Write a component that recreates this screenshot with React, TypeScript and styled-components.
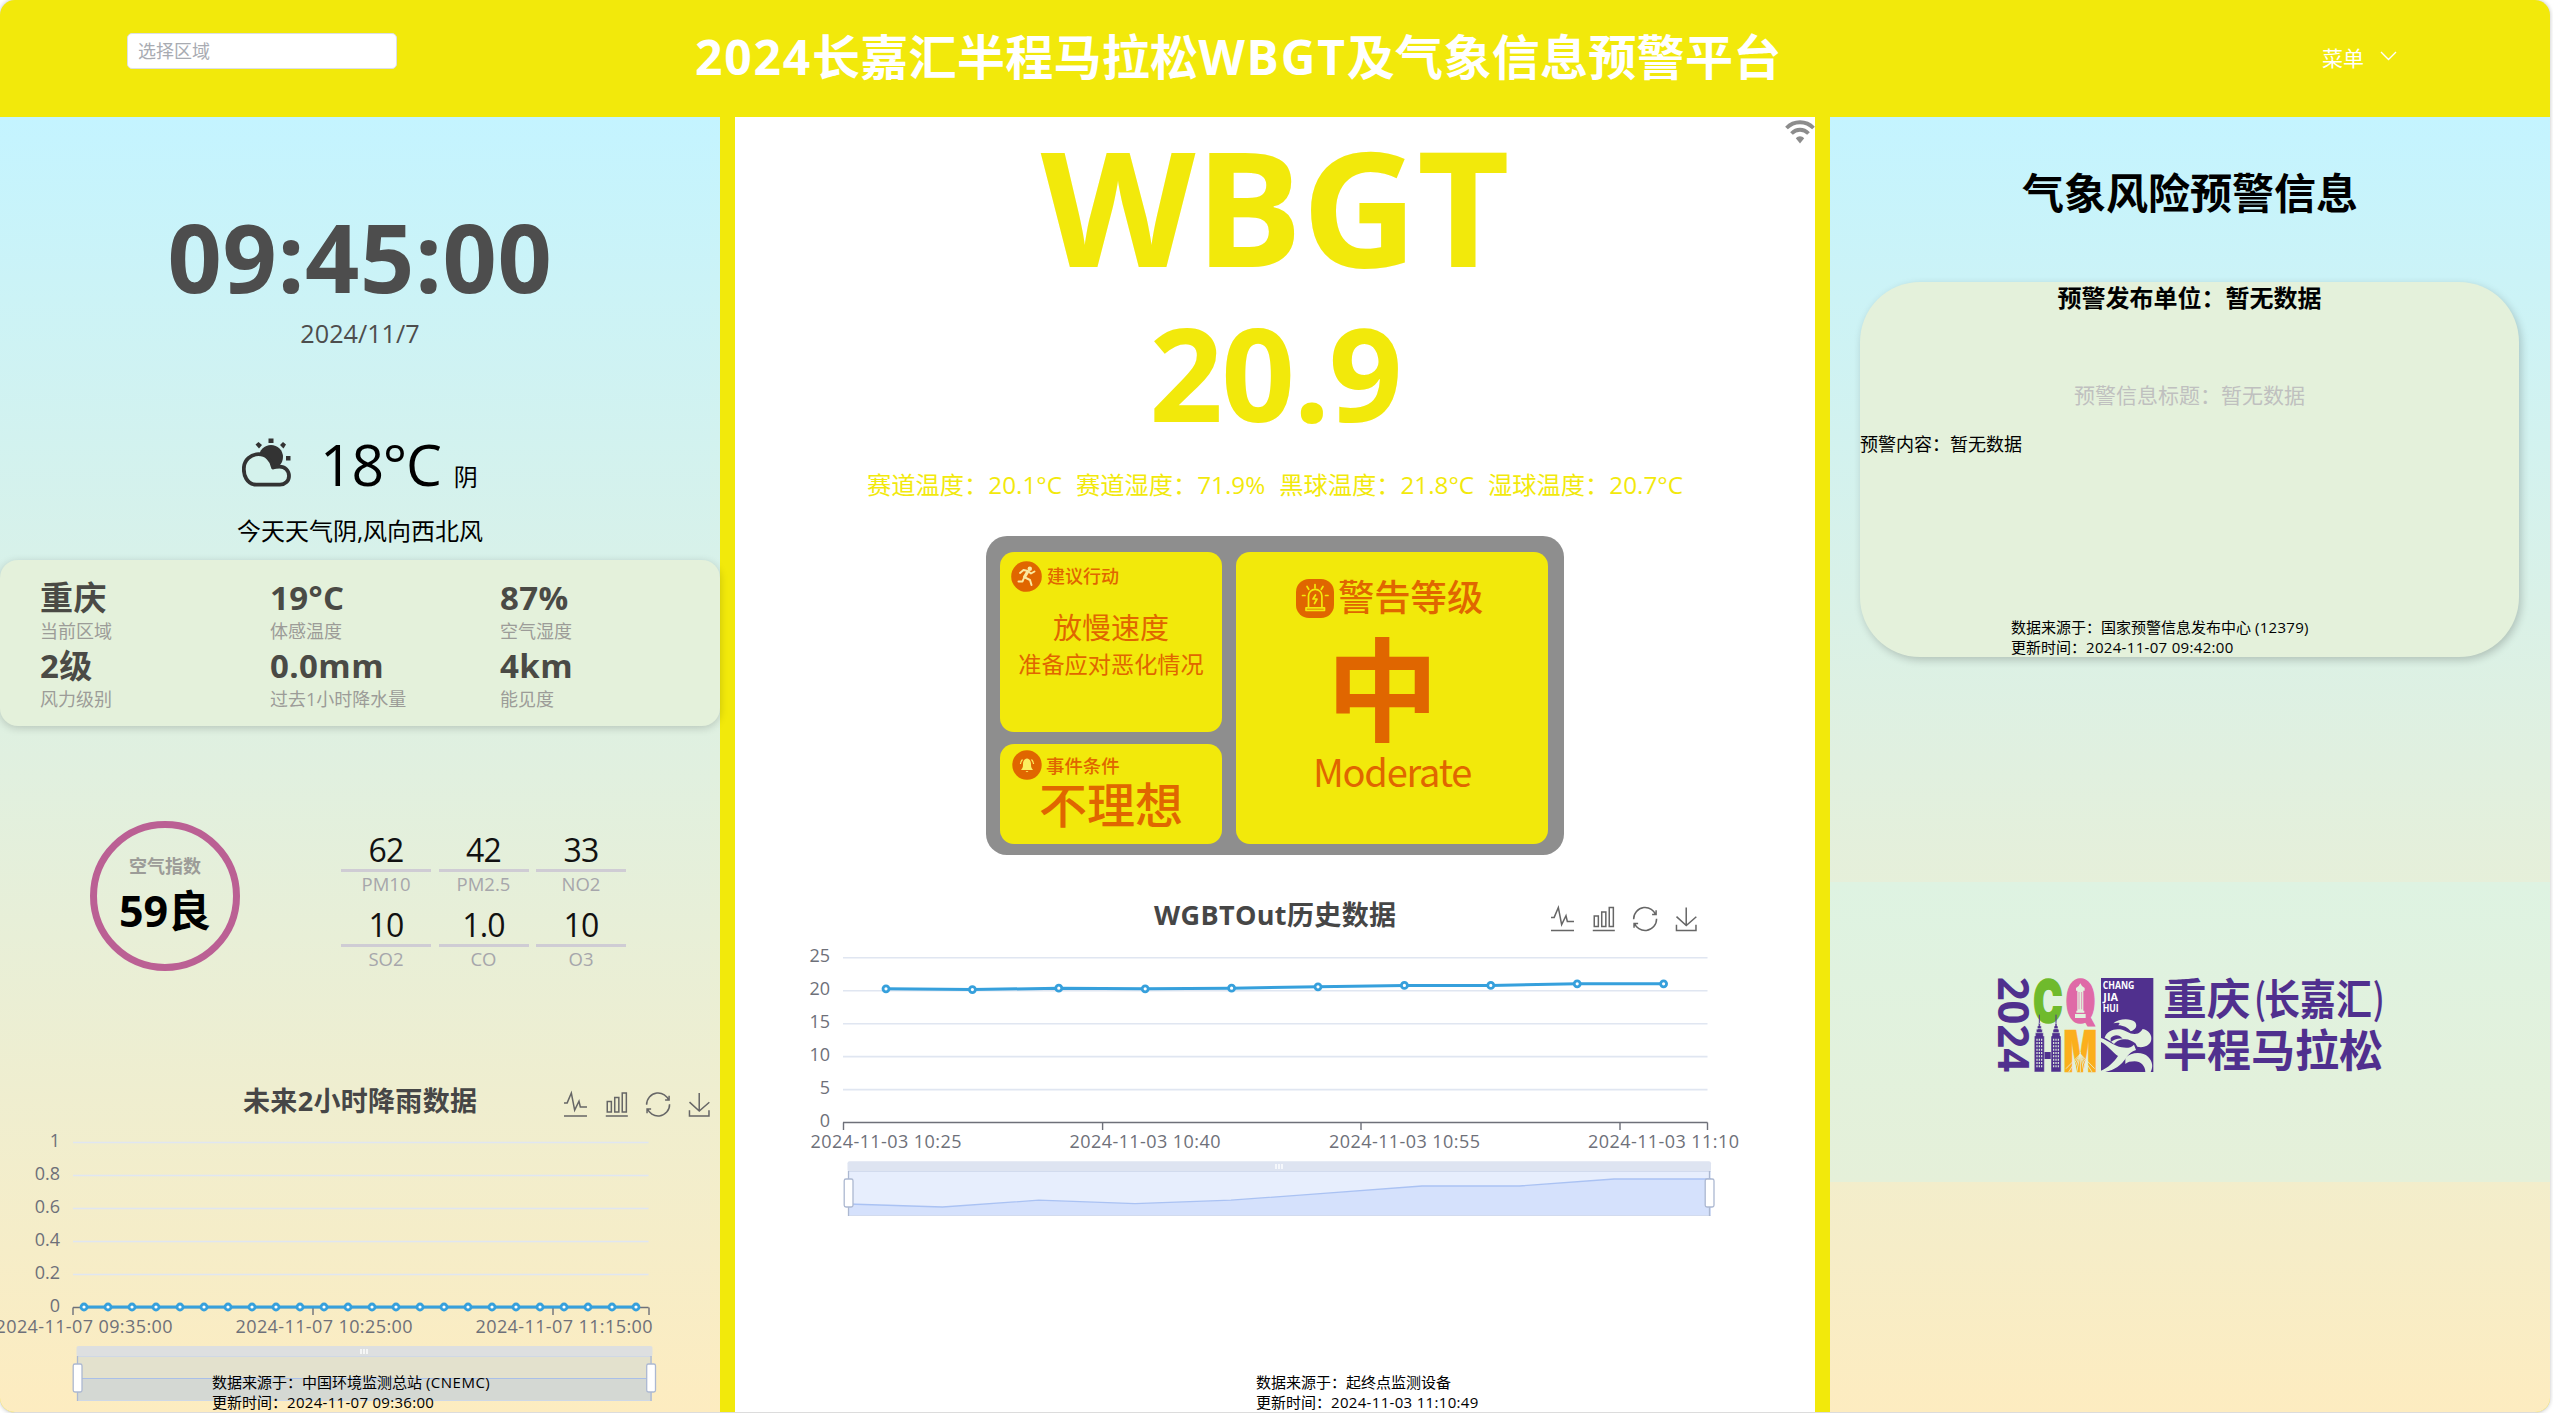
import React from "react";
import styled, { createGlobalStyle } from "styled-components";

const YELLOW = "#f2e90b";
const ORANGE = "#e06600";
const PURPLE = "#50308e";
const SANS = `"Open Sans", "Noto Sans CJK SC", sans-serif`;
const HAN = `"Noto Sans CJK SC", sans-serif`;
const BLOCK = `Inter, "Open Sans", sans-serif`;

const Global = createGlobalStyle`
  body { margin: 0; background: #fff; }
  * { box-sizing: border-box; }
`;

const Page = styled.div`
  width: 2550px;
  height: 1413px;
  font-family: ${SANS};
  color: #000;
  overflow: hidden;
  border-bottom: 1px solid #dcdcdc;
  border-radius: 15px;
  background: ${YELLOW};
  box-shadow: 0 0 4px rgba(0, 0, 0, 0.25);
  white-space: nowrap;
`;

const Header = styled.header`
  height: 117px;
  display: flex;
  align-items: flex-start;
  color: #fff;
`;

const AreaSelect = styled.div`
  margin: 33px 0 0 127px;
  width: 270px;
  height: 36px;
  padding-left: 10px;
  border: 1px solid #dcdfe6;
  border-radius: 5px;
  background: #fff;
  color: #a8abb2;
  font-size: 18px;
  line-height: 34px;
`;

const Title = styled.h1`
  margin: 21px 0 0 298px;
  width: 1090px;
  font-size: 48px;
  line-height: 72px;
  font-weight: 700;
  letter-spacing: 0.3px;
`;

const Spaced = styled.span<{ $by: number }>`
  letter-spacing: ${(p) => p.$by}px;
`;

const Menu = styled.div`
  margin: 42px 0 0 537px;
  display: flex;
  align-items: center;
  gap: 16px;
  font-size: 21px;
  line-height: 32px;
  svg { margin-top: -5px; }
`;

const Columns = styled.main`
  display: flex;
  gap: 15px;
  height: 1295px;
`;

const SideColumn = styled.section`
  width: 720px;
  display: flex;
  flex-direction: column;
  background: linear-gradient(#c4f4ff, #fdecc0);
`;

const CenterColumn = styled.section`
  position: relative;
  width: 1080px;
  display: flex;
  flex-direction: column;
  background: #fff;
`;

const Line = styled.div<{
  $size: number;
  $h: number;
  $top?: number;
  $color?: string;
  $bold?: boolean;
  $left?: boolean;
  $spacing?: number;
}>`
  margin-top: ${(p) => p.$top ?? 0}px;
  height: ${(p) => p.$h}px;
  line-height: ${(p) => p.$h}px;
  font-size: ${(p) => p.$size}px;
  font-weight: ${(p) => (p.$bold ? 700 : 400)};
  color: ${(p) => p.$color ?? "#000"};
  text-align: ${(p) => (p.$left ? "left" : "center")};
  letter-spacing: ${(p) => p.$spacing ?? 0}px;
`;

const Weather = styled.div`
  margin: 74px 0 0 242px;
  height: 80px;
  display: flex;
  line-height: 80px;
  font-size: 57px;
  letter-spacing: -1.2px;
  svg { margin: 14px 27px 0 0; }
  small { font-size: 24px; margin-left: 13px; line-height: 106px; letter-spacing: 0; }
`;

const InfoCard = styled.div`
  margin-top: 9px;
  height: 166px;
  padding: 17px 0 0 40px;
  display: grid;
  grid-template-columns: repeat(3, 230px);
  grid-auto-rows: 66px;
  row-gap: 2px;
  border-radius: 18px;
  background: #e4f1db;
  box-shadow: 0 2px 8px rgba(0, 0, 0, 0.18);
`;

const AirRow = styled.div`
  margin-top: 95px;
  height: 150px;
  padding-left: 90px;
  display: flex;
`;

const AirCircle = styled.div`
  width: 150px;
  height: 150px;
  padding-top: 25px;
  border: 7px solid #bb6094;
  border-radius: 50%;
`;

const Pollutants = styled.div`
  margin: 10px 0 0 101px;
  display: grid;
  grid-template-columns: repeat(3, 90px);
  grid-auto-rows: 65px;
  gap: 10px 7.5px;
`;

const PollutantValue = styled.div`
  height: 41px;
  border-bottom: 3px solid #cfccd4;
  color: #111;
  font-size: 32px;
  line-height: 37px;
  text-align: center;
  letter-spacing: -0.8px;
`;

const ChartArea = styled.div<{ $top: number; $h: number }>`
  position: relative;
  margin-top: ${(p) => p.$top}px;
  height: ${(p) => p.$h}px;
  svg { display: block; }
`;

const Source = styled.div<{ $left: number; $top: number }>`
  margin: ${(p) => p.$top}px 0 0 ${(p) => p.$left}px;
  font-size: 15px;
  line-height: 20px;
`;

const ChartSource = styled(Source)`
  position: absolute;
  left: 0;
  top: 0;
`;

const Wifi = styled.svg`
  position: absolute;
  right: 0;
  top: 2px;
`;

const Readings = styled.div`
  margin-top: 23px;
  height: 30px;
  display: flex;
  justify-content: center;
  gap: 14px;
  color: ${YELLOW};
  font-size: 24.25px;
  line-height: 30px;
`;

const Board = styled.div`
  margin: 36px 0 0 251px;
  width: 578px;
  height: 319px;
  padding: 16px 15px 11px 14px;
  display: grid;
  grid-template: 180px 100px / 222px 312px;
  gap: 12px 14px;
  border-radius: 21px;
  background: #8e8e8e;
  color: ${ORANGE};
  font-family: ${HAN};
`;

const Cell = styled.div<{ $tall?: boolean }>`
  grid-row: ${(p) => (p.$tall ? "1 / 3" : "auto")};
  grid-column: ${(p) => (p.$tall ? 2 : 1)};
  border-radius: 14px;
  background: ${YELLOW};
  text-align: center;
`;

const CellHead = styled.div<{ $top: number; $left: number; $gap: number; $size: number; $h: number; $lift: number }>`
  display: flex;
  align-items: center;
  margin: ${(p) => p.$top}px 0 0 ${(p) => p.$left}px;
  height: ${(p) => p.$h}px;
  gap: ${(p) => p.$gap}px;
  font-size: ${(p) => p.$size}px;
  line-height: ${(p) => p.$h}px;
  font-weight: 500;
  span { margin-top: ${(p) => -p.$lift}px; }
`;

const CellText = styled.div<{ $size: number; $h: number; $top: number; $weight?: number; $spacing?: number }>`
  margin-top: ${(p) => p.$top}px;
  font-size: ${(p) => p.$size}px;
  height: ${(p) => p.$h}px;
  line-height: ${(p) => p.$h}px;
  font-weight: ${(p) => p.$weight ?? 400};
  letter-spacing: ${(p) => p.$spacing ?? 0}px;
`;

const AlertCard = styled.div`
  margin: 59px 0 0 30px;
  width: 659px;
  height: 375px;
  border-radius: 60px;
  background: #e4f1db;
  box-shadow: 2px 3px 9px rgba(0, 0, 0, 0.2);
`;

const LogoPanel = styled.div`
  margin-top: 225px;
  height: 300px;
  padding: 78px 0 0 150px;
  background: linear-gradient(#def3e2, #e5f0d9);
`;

const TOOLS = [
  { box: [4.1, 6.9, 51.4, 51.1], d: "M4.1,28.9h7.1l9.3-22l7.4,38l9.7-19.7l3,12.8h14.9M4.1,58h51.4" },
  { box: [3.1, 2, 53.7, 56], d: "M6.7,22.9h10V48h-10V22.9zM24.9,13h10v35h-10V13zM43.2,2h10v46h-10V2zM3.1,58h53.7" },
  {
    box: [2.1, 2, 55.8, 56],
    d: "M47,18.9h9.8V8.7M56.3,20.1C52.1,9,40.5,0.6,26.8,2.1C12.6,3.7,1.6,16.2,2.1,30.6M13,41.1H3.1v10.2M3.7,39.9c4.2,11.1,15.8,19.5,29.5,18c14.2-1.6,25.2-14.1,24.7-28.5",
  },
  { box: [4.6, 0, 50.1, 58], d: "M4.7,22.9L29.3,45.5L54.7,23.4M4.6,43.6L4.6,58L53.8,58L53.8,43.6M29.2,45.1L29.2,0" },
];

function Toolbox({ x, y }: { x: number; y: number }) {
  return (
    <g fill="none" stroke="#666" strokeWidth={1.5}>
      {TOOLS.map((t, i) => {
        const s = 23 / Math.max(t.box[2], t.box[3]);
        const cx = t.box[0] + t.box[2] / 2;
        const cy = t.box[1] + t.box[3] / 2;
        return (
          <path
            key={i}
            d={t.d}
            vectorEffect="non-scaling-stroke"
            transform={`translate(${x + i * 41.3} ${y}) scale(${s}) translate(${-cx} ${-cy})`}
          />
        );
      })}
    </g>
  );
}

interface ChartProps {
  width: number;
  height: number;
  title: string;
  titleX: number;
  titleY: number;
  titleLen: number;
  tools: [number, number];
  x0: number;
  x1: number;
  yTop: number;
  yStep: number;
  yLabels: string[];
  ticks: number[];
  xLabels: { x: number; text: string }[];
  xLabelY: number;
  labelLen: number;
  points: [number, number][];
  children?: React.ReactNode;
}

function Chart(p: ChartProps) {
  const base = p.yTop + p.yStep * (p.yLabels.length - 1);
  return (
    <svg width={p.width} height={p.height} fontFamily={SANS} fontSize={18} fill="#6e7079">
      <text x={p.titleX} y={p.titleY} fontSize={27} fontWeight={700} fill="#464646" textAnchor="middle" textLength={p.titleLen}>
        {p.title}
      </text>
      <Toolbox x={p.tools[0]} y={p.tools[1]} />
      {p.yLabels.map((l, i) => {
        const y = p.yTop + p.yStep * i;
        return (
          <g key={l}>
            {i < p.yLabels.length - 1 && <path d={`M${p.x0} ${y}H${p.x1}`} stroke="#e0e6f1" strokeWidth={1.6} />}
            <text x={p.x0 - 13} y={y + 4.6} textAnchor="end">{l}</text>
          </g>
        );
      })}
      <path
        d={`M${p.x0} ${base}H${p.x1}` + p.ticks.map((t) => `M${t} ${base}v7.5`).join("")}
        stroke="#6e7079"
        strokeWidth={1.4}
        fill="none"
      />
      {p.xLabels.map((l) => (
        <text key={l.text} x={l.x} y={p.xLabelY} textAnchor="middle" textLength={p.labelLen}>{l.text}</text>
      ))}
      <polyline points={p.points.map((q) => q.join(",")).join(" ")} fill="none" stroke="#36a0dc" strokeWidth={3} />
      {p.points.map((q, i) => (
        <circle key={i} cx={q[0]} cy={q[1]} r={3} fill="#fff" stroke="#36a0dc" strokeWidth={2.8} />
      ))}
      {p.children}
    </svg>
  );
}

function Handle({ x, y }: { x: number; y: number }) {
  return (
    <g fill="#fff" stroke="#acb8d1" strokeWidth={1.3}>
      <path d={`M${x} ${y - 8}v45`} />
      <rect x={x - 4.3} y={y} width={8.8} height={28} rx={1.8} />
    </g>
  );
}

function Grip({ x, y }: { x: number; y: number }) {
  return <path d={`M${x - 3} ${y}v5M${x} ${y}v5M${x + 3} ${y}v5`} stroke="#fff" strokeWidth={1.4} />;
}

function RainChart() {
  const points = Array.from({ length: 24 }, (_, i) => [84 + i * 24, 247] as [number, number]);
  return (
    <Chart
      width={720} height={352} title="未来2小时降雨数据" titleX={360} titleY={50.5} titleLen={234}
      tools={[575.5, 44.5]} x0={73} x1={648.5} yTop={82.5} yStep={33}
      yLabels={["1", "0.8", "0.6", "0.4", "0.2", "0"]} ticks={[73, 313, 553, 649]}
      xLabels={[
        { x: 84, text: "2024-11-07 09:35:00" },
        { x: 324, text: "2024-11-07 10:25:00" },
        { x: 564, text: "2024-11-07 11:15:00" },
      ]}
      xLabelY={273} labelLen={177} points={points}
    >
      <rect x={76.5} y={286} width={576} height={10.5} rx={2} fill="#dddfe0" />
      <rect x={77} y={296} width={575} height={22.5} fill="#e3e1cd" />
      <rect x={77} y={318.5} width={575} height={22} fill="#d4d8d3" />
      <path d="M77 296.5H652M77 340.5H652" stroke="#cfd8e6" />
      <path d="M77 318.5H652" stroke="#a9bfe8" strokeWidth={1.2} />
      <Grip x={364} y={289} />
      <Handle x={77.5} y={304} />
      <Handle x={651} y={304} />
    </Chart>
  );
}

function HistoryChart() {
  const ys = [118.8, 119.6, 118.2, 118.8, 118.2, 116.8, 115.4, 115.4, 113.8, 113.8];
  const trend = "M113 334L207.5 337L303.7 330.2L400 333.6L496 330.2L592 323.2L687 316L784.5 316L879 309H976";
  return (
    <Chart
      width={1080} height={350} title="WGBTOut历史数据" titleX={540} titleY={55} titleLen={242}
      tools={[827.5, 49]} x0={108} x1={972.5} yTop={87.8} yStep={32.95}
      yLabels={["25", "20", "15", "10", "5", "0"]} ticks={[108.5, 367.6, 626, 885, 972.5]}
      xLabels={[
        { x: 151, text: "2024-11-03 10:25" },
        { x: 410, text: "2024-11-03 10:40" },
        { x: 669.5, text: "2024-11-03 10:55" },
        { x: 928.5, text: "2024-11-03 11:10" },
      ]}
      xLabelY={278} labelLen={151} points={ys.map((y, i) => [151 + i * 86.4, y])}
    >
      <rect x={112.5} y={291.3} width={863.5} height={10.5} rx={2} fill="#dee4f1" />
      <rect x={113} y={301} width={863} height={44.5} fill="#e7eefd" />
      <path d={`${trend}V345.5H113z`} fill="#d5e1fc" />
      <path d={trend} fill="none" stroke="#aac2f3" strokeWidth={1.3} />
      <path d="M113 301.5H976M113 345.5H976" stroke="#d2dbee" />
      <Grip x={544} y={294} />
      <Handle x={113.5} y={309} />
      <Handle x={974.5} y={309} />
    </Chart>
  );
}

function CloudIcon() {
  return (
    <svg width={51} height={50} viewBox="0 0 51 50">
      <circle cx={29} cy={19} r={12} fill="#333" />
      <path d="M26.5 0.5h5v4.5h-5zM13.5 6.5l3-2.5 3.5 3-3 3.500zM38 7l3-3 3 2.500-2.500 4zM44 18h4.500v4.500H44z" fill="#333" />
      <path
        d="M12 46.500C5 45 1.800 38 1.800 31C1.800 22 9 16.200 16.500 16.200C24 16.200 30 22 31 29.500C33 28.800 35 28.600 37.500 28.600C43 28.600 47 32.500 47 38C47 43 43 46.700 38 46.700H14z"
        fill="#d4f2ec" stroke="#333" strokeWidth={3.8} strokeLinejoin="round"
      />
    </svg>
  );
}

function RunnerBadge() {
  return (
    <svg width={31} height={31} viewBox="0 0 31 31">
      <circle cx={15.500} cy={15.500} r={15.300} fill={ORANGE} />
      <g fill="none" stroke="#fbe9a0" strokeLinecap="round" strokeLinejoin="round">
        <path d="M9 12L12.500 9L17 10L20 12.500L23.500 10.500" strokeWidth={1.900} />
        <path d="M16.500 11L13.500 16" strokeWidth={3.200} />
        <path d="M14 16.500L19 19L20.500 24M12.500 18L11.500 20.500L7.500 20.500" strokeWidth={2} />
      </g>
      <circle cx={18.800} cy={7.800} r={2.200} fill="#fbe9a0" />
    </svg>
  );
}

function BellBadge() {
  return (
    <svg width={30} height={30} viewBox="0 0 30 30">
      <circle cx={15} cy={15} r={14.700} fill={ORANGE} />
      <path d="M15 8.500C11.500 9 11 12 11 15C11 17.500 10 18.500 9 20H21C20 18.500 19 17.500 19 15C19 12 18.500 9 15 8.500zM13.500 21h3l-1.500 1.200z" fill="#fbef60" />
      <path d="M10.500 9.500Q8.500 11.500 8.500 14M19.500 9.500Q21.500 11.500 21.500 14" fill="none" stroke="#fbef60" strokeWidth={1.200} />
    </svg>
  );
}

function SirenBadge() {
  return (
    <svg width={38} height={39} viewBox="0 0 38 39">
      <rect width={38} height={39} rx={13} fill={ORANGE} />
      <g fill="none" stroke={YELLOW} strokeWidth={1.700} strokeLinecap="round" strokeLinejoin="round">
        <path d="M12.500 28V17a6.700 6.700 0 0 1 13.400 0V28M10 28.800h18.500v2.500H10z" />
        <path d="M19 5.500v3.500M11 7.500l1.700 2.800M27 7.500l-1.700 2.800M6.500 16.500h2.500M29.500 16.500H32" />
        <path d="M19.500 16l-2.500 4h4l-2.500 4.500" />
      </g>
    </svg>
  );
}

function WifiIcon() {
  return (
    <Wifi width={30} height={26} viewBox="0 0 30 26">
      <g fill="none" stroke="#8c8c8c" strokeWidth={3.800}>
        <path d="M1.500 9C9 1.300 21 1.300 28.500 9" />
        <path d="M6.500 14.500C11.500 9.500 18.500 9.500 23.500 14.500" />
      </g>
      <path d="M15 24.500L10.800 19.300C13 16.500 17 16.500 19.200 19.300z" fill="#8c8c8c" />
    </Wifi>
  );
}

function Tower({ x }: { x: number }) {
  return (
    <g>
      <path d={`M${x} 164V190`} stroke={PURPLE} strokeWidth={3} />
      <path
        d={`M${x - 3} 190h6v8h3v10h3v10h3v10h3v108h-30v-108h3v-10h3v-10h3v-10h3z`}
        fill={PURPLE} stroke="#e0f1de" strokeWidth={1.500}
      />
      <path d={`M${x - 7} 206h14M${x - 10} 218h20`} stroke="#e0f1de" strokeWidth={2} />
      <path
        d={`M${x - 7} 236V322M${x} 236V322M${x + 7} 236V322`}
        stroke="#e0f1de" strokeWidth={3.500} strokeDasharray="6 4"
      />
    </g>
  );
}

function MarathonLogo() {
  const pale = "#e2f1de";
  return (
    <svg width={420} height={130} viewBox="0 0 1260 390" fill={PURPLE} fontFamily={SANS} fontWeight={700}>
      <text transform="translate(53 50) rotate(90)" fontSize={131} textLength={286} lengthAdjust="spacingAndGlyphs">2024</text>
      <g fontFamily={BLOCK} fontWeight={900}>
        <text transform="translate(160 185)" fontSize={174} textLength={88} lengthAdjust="spacingAndGlyphs" fill="#6fba2c" stroke="#6fba2c" strokeWidth={5}>C</text>
        <text transform="translate(257 185)" fontSize={174} textLength={90} lengthAdjust="spacingAndGlyphs" fill="#df69a7" stroke="#df69a7" strokeWidth={5}>Q</text>
        <path d="M283 76h36v84h-36z" fill="#df69a7" />
        <path d="M289 158h24v-6h-3V92h4v-8l-8-6-5-8-5 8-8 6v8h4v60h-3zM285 162h32v12h-32z" fill={pale} />
        <path d="M297 96v52M305 96v52" stroke="#df69a7" strokeWidth={2} />
        <text transform="translate(158 336)" fontSize={130} textLength={90} lengthAdjust="spacingAndGlyphs">H</text>
        <Tower x={178} />
        <Tower x={228} />
        <text transform="translate(250 335)" fontSize={174} textLength={102} lengthAdjust="spacingAndGlyphs" fill="#fbaf1c" stroke="#fbaf1c" strokeWidth={2}>M</text>
      </g>
      <path
        d="M301 276V336M301 282L258 326M301 282L266 336M301 282L280 336M301 282L290 336M301 282L344 326M301 282L336 336M301 282L322 336M301 282L312 336"
        stroke={pale} strokeWidth={2.500} fill="none"
      />
      <rect x={363} y={54} width={157} height={282} />
      <g fill="#fff" fontSize={31}>
        <text x={368} y={88} textLength={95} lengthAdjust="spacingAndGlyphs">CHANG</text>
        <text x={370} y={122} textLength={44} lengthAdjust="spacingAndGlyphs">JIA</text>
        <text x={368} y={156} textLength={48} lengthAdjust="spacingAndGlyphs">HUI</text>
      </g>
      <g fill={pale}>
        <path d="M400 190C416 176 450 174 465 186C474 198 466 210 452 214C445 203 428 196 415 196L419 189C412 188 405 189 400 190z" />
        <path d="M374 234C378 214 402 205 420 208C440 212 446 222 464 222C480 222 484 212 488 207C506 210 518 226 513 243C507 260 486 264 472 260L466 250C456 242 444 236 430 238C414 240 408 246 402 252C392 244 380 236 374 234z" />
        <path d="M363 234C385 242 404 258 425 262C440 265 452 264 462 254L468 270C455 274 446 282 438 294C424 316 404 330 376 336H363V332C384 324 402 306 414 288C400 280 382 254 363 246z" />
        <path d="M436 294C452 276 488 274 504 290C518 304 520 320 512 336H496C496 318 482 304 464 304C452 304 442 306 436 312z" />
      </g>
      <path d="M392 234C404 222 418 224 428 236C414 234 400 240 392 246z" />
      <g fontFamily={HAN}>
        <text transform="translate(549 166)" fontSize={130} textLength={262} lengthAdjust="spacingAndGlyphs">重庆</text>
        <text transform="translate(822 163)" fontSize={124} textLength={36} lengthAdjust="spacingAndGlyphs" fontWeight={500}>(</text>
        <text transform="translate(853 166)" fontSize={126} textLength={322} lengthAdjust="spacingAndGlyphs">长嘉汇</text>
        <text transform="translate(1178 163)" fontSize={124} textLength={36} lengthAdjust="spacingAndGlyphs" fontWeight={500}>)</text>
        <text transform="translate(549 321)" fontSize={134} textLength={660} lengthAdjust="spacingAndGlyphs">半程马拉松</text>
      </g>
    </svg>
  );
}

const INFO = [
  ["重庆", "当前区域"],
  ["19°C", "体感温度"],
  ["87%", "空气湿度"],
  ["2级", "风力级别"],
  ["0.0mm", "过去1小时降水量"],
  ["4km", "能见度"],
];

const POLLUTANTS = [
  ["62", "PM10"],
  ["42", "PM2.5"],
  ["33", "NO2"],
  ["10", "SO2"],
  ["1.0", "CO"],
  ["10", "O3"],
];

const READINGS = ["赛道温度：20.1°C", "赛道湿度：71.9%", "黑球温度：21.8°C", "湿球温度：20.7°C"];

export default function App() {
  return (
    <>
      <Global />
      <Page>
        <Header>
          <AreaSelect>选择区域</AreaSelect>
          <Title>
            <Spaced $by={1.8}>2024</Spaced>长嘉汇半程马拉松<Spaced $by={1.8}>WBGT</Spaced>及气象信息预警平台
          </Title>
          <Menu>
            菜单
            <svg width={17} height={10} fill="none" stroke="#fff" strokeWidth={1.4}>
              <path d="M1 1L8.500 8.500L16 1" />
            </svg>
          </Menu>
        </Header>
        <Columns>
          <SideColumn>
            <Line $size={95} $h={120} $top={79} $color="#4d4d4d" $bold $spacing={0.6}>09:45:00</Line>
            <Line $size={25.2} $h={34} $color="#4d4d4d">2024/11/7</Line>
            <Weather>
              <CloudIcon />
              18°C<small>阴</small>
            </Weather>
            <Line $size={24} $h={40} $top={7}>今天天气阴,风向西北风</Line>
            <InfoCard>
              {INFO.map(([value, label]) => (
                <div key={label}>
                  <Line $size={33} $h={42} $color="#4a4a45" $bold $left $spacing={0.4}>{value}</Line>
                  <Line $size={18} $h={24} $color="#9c9c98" $left>{label}</Line>
                </div>
              ))}
            </InfoCard>
            <AirRow>
              <AirCircle>
                <Line $size={18} $h={26} $color="#9c9c98" $bold>空气指数</Line>
                <Line $size={43} $h={60} $top={2} $bold>59良</Line>
              </AirCircle>
              <Pollutants>
                {POLLUTANTS.map(([value, label]) => (
                  <div key={label}>
                    <PollutantValue>{value}</PollutantValue>
                    <Line $size={18.5} $h={24} $color="#a6a6ab">{label}</Line>
                  </div>
                ))}
              </Pollutants>
            </AirRow>
            <ChartArea $top={89} $h={352}>
              <RainChart />
              <ChartSource $left={212} $top={312}>
                数据来源于：中国环境监测总站 <Spaced $by={0.5}>(CNEMC)</Spaced>
                <br />
                更新时间：<Spaced $by={0.3}>2024-11-07 09:36:00</Spaced>
              </ChartSource>
            </ChartArea>
          </SideColumn>

          <CenterColumn>
            <WifiIcon />
            <Line $size={160} $h={176} $color={YELLOW} $bold $spacing={-0.6}>WBGT</Line>
            <Line $size={129} $h={150} $top={4} $color={YELLOW} $bold $spacing={-1.6}>20.9</Line>
            <Readings>
              {READINGS.map((r) => <span key={r}>{r}</span>)}
            </Readings>
            <Board>
              <Cell>
                <CellHead $top={9} $left={11} $gap={5} $size={18} $h={31} $lift={2}>
                  <RunnerBadge /><span>建议行动</span>
                </CellHead>
                <CellText $size={29} $h={40} $top={14}>放慢速度</CellText>
                <CellText $size={23.2} $h={32} $top={1}>准备应对恶化情况</CellText>
              </Cell>
              <Cell $tall>
                <CellHead $top={27} $left={60} $gap={4} $size={36.3} $h={39} $lift={6}>
                  <SirenBadge /><span>警告等级</span>
                </CellHead>
                <CellText $size={112} $h={140} $top={-4} $weight={700}>
                  <Spaced $by={19}>中</Spaced>
                </CellText>
                <CellText $size={38} $h={50} $top={-8} $spacing={-1.2}>
                  <Spaced $by={-1.2}>Moderate</Spaced>
                </CellText>
              </Cell>
              <Cell>
                <CellHead $top={6} $left={12} $gap={4} $size={18.4} $h={30} $lift={1}>
                  <BellBadge /><span>事件条件</span>
                </CellHead>
                <CellText $size={48} $h={60} $top={-8} $weight={500}>不理想</CellText>
              </Cell>
            </Board>
            <ChartArea $top={15} $h={350}>
              <HistoryChart />
            </ChartArea>
            <Source $left={521} $top={152}>
              数据来源于：起终点监测设备
              <br />
              更新时间：<Spaced $by={0.32}>2024-11-03 11:10:49</Spaced>
            </Source>
          </CenterColumn>

          <SideColumn>
            <Line $size={42} $h={60} $top={46} $bold>气象风险预警信息</Line>
            <AlertCard>
              <Line $size={24} $h={32} $bold>预警发布单位：暂无数据</Line>
              <Line $size={21} $h={30} $top={66} $color="#bfc0bf">预警信息标题：暂无数据</Line>
              <Line $size={18} $h={24} $top={22} $left>预警内容：暂无数据</Line>
              <Source $left={151} $top={161}>
                数据来源于：国家预警信息发布中心 <Spaced $by={0.3}>(12379)</Spaced>
                <br />
                更新时间：<Spaced $by={0.32}>2024-11-07 09:42:00</Spaced>
              </Source>
            </AlertCard>
            <LogoPanel>
              <MarathonLogo />
            </LogoPanel>
          </SideColumn>
        </Columns>
      </Page>
    </>
  );
}
